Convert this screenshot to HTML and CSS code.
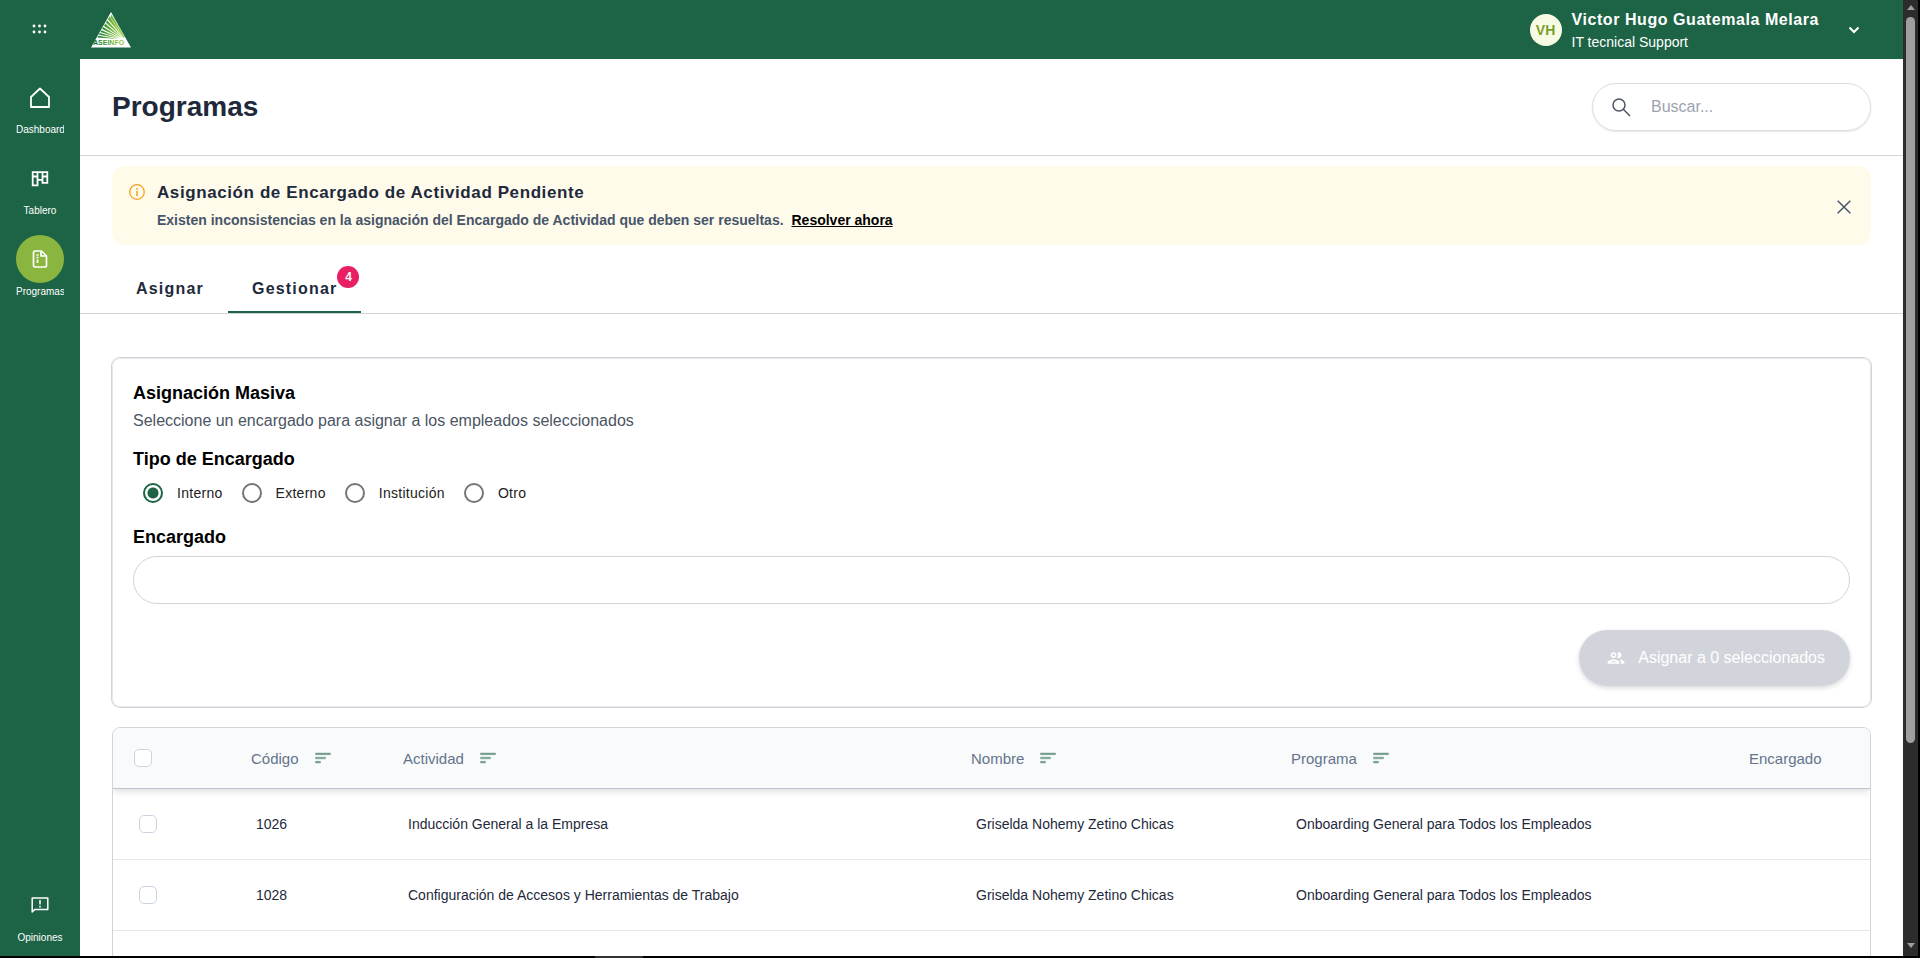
FILE: index.html
```
<!DOCTYPE html>
<html lang="es">

<head>
    <meta charset="UTF-8">
    <meta name="viewport" content="width=device-width, initial-scale=1">
    <title>Programas</title>
    <link rel="stylesheet" href="styles.css">
</head>

<body>
    <div class="app">
        <nav class="sidebar">
            <button class="sidebar__apps" aria-label="Aplicaciones">
                <svg width="16" height="12" viewBox="0 0 16 12" fill="#fff">
                    <circle cx="2" cy="3" r="1.4" /><circle cx="7.5" cy="3" r="1.4" /><circle cx="13" cy="3" r="1.4" />
                    <circle cx="2" cy="9" r="1.4" /><circle cx="7.5" cy="9" r="1.4" /><circle cx="13" cy="9" r="1.4" />
                </svg>
            </button>
            <a class="sidebar__item" href="#dashboard">
                <span class="sidebar__icon">
                    <svg width="24" height="24" viewBox="0 0 24 24" fill="none" stroke="#fff" stroke-width="1.8" stroke-linejoin="round">
                        <path d="M3 22V12l9-8.500L21 12v10z" />
                    </svg>
                </span>
                <span class="sidebar__label">Dashboard</span>
            </a>
            <a class="sidebar__item" href="#tablero">
                <span class="sidebar__icon">
                    <svg width="18" height="18" viewBox="0 0 18 18" fill="none" stroke="#fff" stroke-width="1.8">
                        <path d="M1.700 3.200h14.600v10.600h-4.800v-3h-5v5.500H1.700zM6.500 3.200v8M11.500 3.200v8M1.700 7.500h4.800M11.500 7.500h4.800" />
                    </svg>
                </span>
                <span class="sidebar__label">Tablero</span>
            </a>
            <a class="sidebar__item sidebar__item--active" href="#programas">
                <span class="sidebar__icon">
                    <svg width="18" height="18" viewBox="0 0 18 18" fill="none" stroke="#fff" stroke-width="1.700" stroke-linejoin="round">
                        <path d="M4 1h6.500l5 5v9.500a1.500 1.500 0 0 1-1.500 1.500H4a1.500 1.500 0 0 1-1.500-1.500v-13A1.500 1.500 0 0 1 4 1z" />
                        <path d="M10 1.500v4.500h5M5.500 5h2M5.500 7.500h2M6.500 9.500v3.500" />
                    </svg>
                </span>
                <span class="sidebar__label">Programas</span>
            </a>
            <a class="sidebar__item sidebar__item--last" href="#opiniones">
                <span class="sidebar__icon">
                    <svg width="18" height="18" viewBox="0 0 18 18" fill="none" stroke="#fff" stroke-width="1.500">
                        <path d="M1.200 16V2h15.600v11.500H3.700z" stroke-linejoin="round" />
                        <path d="M9 4v4.500M9 9.800v1.600" />
                    </svg>
                </span>
                <span class="sidebar__label">Opiniones</span>
            </a>
        </nav>

        <div class="page">
            <header class="topbar">
                <svg class="topbar__logo" width="40" height="36" viewBox="0 0 40 36">
                    <defs>
                        <linearGradient id="rays" gradientUnits="userSpaceOnUse" x1="3" y1="0" x2="36" y2="0">
                            <stop offset="0.100" stop-color="#157a3a" />
                            <stop offset="0.700" stop-color="#8cc63f" />
                        </linearGradient>
                    </defs>
                    <path d="M20 0l20 35.500H0z" fill="#fff" />
                    <g fill="url(#rays)">
                        <path d="M20.300 2.500L33.500 26l-14-20.500z" />
                        <path d="M20.600 2.500l3.200 5L34 26l-2-1z" />
                        <path d="M18.400 4.500L33 26 17 7.200z" />
                        <path d="M16.200 8.200L32 26 14.900 10.500z" />
                        <path d="M14.200 11.600L31 26 13 13.900z" />
                        <path d="M12.300 15L30 26 11.100 17.100z" />
                        <path d="M10.500 18.200L29 26.300 9.400 20z" />
                        <path d="M8.900 21.100L28 26.500 8 22.800z" />
                        <path d="M7.300 23.800L27 26.900 6.500 25.500z" />
                    </g>
                    <text class="logo-text" x="2" y="32.500" fill="url(#rays)">ASEINFO</text>
                </svg>
                <div class="user">
                    <span class="user__avatar">VH</span>
                    <div>
                        <div class="user__name">Victor Hugo Guatemala Melara</div>
                        <div class="user__role">IT tecnical Support</div>
                    </div>
                    <button class="user__toggle" aria-label="Menú de usuario">
                        <svg width="12" height="12" viewBox="0 0 12 12" fill="none" stroke="#fff" stroke-width="2">
                            <path d="M1.500 3.500L6 8l4.500-4.500" />
                        </svg>
                    </button>
                </div>
            </header>

            <div class="heading">
                <h1 class="heading__title">Programas</h1>
                <label class="search">
                    <svg width="20" height="20" viewBox="0 0 20 20" fill="none" stroke="#4b5563" stroke-width="1.500">
                        <circle cx="8" cy="8" r="6" />
                        <path d="M12.300 12.300L19 19" />
                    </svg>
                    <input class="search__input" type="search" placeholder="Buscar..." aria-label="Buscar">
                </label>
            </div>

            <section class="alert">
                <svg class="alert__icon" width="16" height="16" viewBox="0 0 16 16" fill="none" stroke="#f59e1b">
                    <circle cx="8" cy="8" r="7.300" stroke-width="1.300" />
                    <path d="M8 4v1.700M8 7v5" stroke-width="1.500" />
                </svg>
                <div class="alert__body">
                    <h2 class="alert__title">Asignación de Encargado de Actividad Pendiente</h2>
                    <p class="alert__text">Existen inconsistencias en la asignación del Encargado de Actividad que deben ser resueltas. <a class="alert__link" href="#resolver">Resolver ahora</a></p>
                </div>
                <button class="alert__close" aria-label="Cerrar">
                    <svg width="14" height="14" viewBox="0 0 14 14" stroke="#475569" stroke-width="1.500">
                        <path d="M.7.700l12.600 12.600M13.300.700L.7 13.300" />
                    </svg>
                </button>
            </section>

            <div class="tabs" role="tablist">
                <button class="tab" role="tab">Asignar</button>
                <button class="tab tab--active" role="tab" aria-selected="true">Gestionar<span class="tab__badge">4</span></button>
            </div>

            <main class="content">
                <form class="card">
                    <h3 class="card__title">Asignación Masiva</h3>
                    <p class="card__text">Seleccione un encargado para asignar a los empleados seleccionados</p>
                    <h3 class="card__title card__title--spaced">Tipo de Encargado</h3>
                    <div class="radios">
                        <label class="radio"><input type="radio" name="tipo" checked>Interno</label>
                        <label class="radio"><input type="radio" name="tipo">Externo</label>
                        <label class="radio"><input type="radio" name="tipo">Institución</label>
                        <label class="radio"><input type="radio" name="tipo">Otro</label>
                    </div>
                    <label class="card__title" for="encargado">Encargado</label>
                    <input class="card__input" id="encargado" type="text">
                    <button class="assign" type="button" disabled>
                        <svg width="20" height="20" viewBox="0 0 24 24" fill="#fff">
                            <path d="M9 13.750c-2.340 0-7 1.170-7 3.500V19h14v-1.750c0-2.330-4.660-3.500-7-3.500zM4.340 17c.84-.58 2.870-1.250 4.660-1.250s3.820.67 4.660 1.250H4.340zM9 12c1.930 0 3.500-1.570 3.500-3.500S10.930 5 9 5 5.500 6.570 5.500 8.500 7.070 12 9 12zm0-5c.83 0 1.500.67 1.500 1.500S9.830 10 9 10s-1.500-.67-1.500-1.500S8.170 7 9 7zm7.040 6.810c1.160.84 1.960 1.960 1.960 3.440V19h4v-1.750c0-2.020-3.500-3.170-5.960-3.440zM15 12c1.930 0 3.500-1.570 3.500-3.500S16.930 5 15 5c-.54 0-1.040.13-1.500.35.63.89 1 1.980 1 3.150s-.37 2.260-1 3.150c.46.22.96.35 1.500.35z" />
                        </svg>
                        Asignar a 0 seleccionados
                    </button>
                </form>

                <div class="table-wrap">
                    <table class="table">
                        <colgroup>
                            <col class="col-check">
                            <col class="col-code">
                            <col>
                            <col class="col-name">
                            <col class="col-program">
                            <col class="col-manager">
                        </colgroup>
                        <thead>
                            <tr>
                                <th><input class="check" type="checkbox" aria-label="Seleccionar todos"></th>
                                <th><button class="sort">Código <svg width="20" height="20" viewBox="0 0 24 24"><path d="M3 18h6v-2H3v2zM3 6v2h18V6H3zm0 7h12v-2H3v2z" /></svg></button></th>
                                <th><button class="sort">Actividad <svg width="20" height="20" viewBox="0 0 24 24"><path d="M3 18h6v-2H3v2zM3 6v2h18V6H3zm0 7h12v-2H3v2z" /></svg></button></th>
                                <th><button class="sort">Nombre <svg width="20" height="20" viewBox="0 0 24 24"><path d="M3 18h6v-2H3v2zM3 6v2h18V6H3zm0 7h12v-2H3v2z" /></svg></button></th>
                                <th><button class="sort">Programa <svg width="20" height="20" viewBox="0 0 24 24"><path d="M3 18h6v-2H3v2zM3 6v2h18V6H3zm0 7h12v-2H3v2z" /></svg></button></th>
                                <th>Encargado</th>
                            </tr>
                        </thead>
                        <tbody>
                            <tr>
                                <td><input class="check" type="checkbox" aria-label="Seleccionar 1026"></td>
                                <td>1026</td>
                                <td>Inducción General a la Empresa</td>
                                <td>Griselda Nohemy Zetino Chicas</td>
                                <td>Onboarding General para Todos los Empleados</td>
                                <td></td>
                            </tr>
                            <tr>
                                <td><input class="check" type="checkbox" aria-label="Seleccionar 1028"></td>
                                <td>1028</td>
                                <td>Configuración de Accesos y Herramientas de Trabajo</td>
                                <td>Griselda Nohemy Zetino Chicas</td>
                                <td>Onboarding General para Todos los Empleados</td>
                                <td></td>
                            </tr>
                            <tr>
                                <td></td>
                                <td></td>
                                <td></td>
                                <td></td>
                                <td></td>
                                <td></td>
                            </tr>
                        </tbody>
                    </table>
                </div>
            </main>
        </div>

        <div class="scrollbar">
            <span class="scrollbar__up"></span>
            <span class="scrollbar__thumb"></span>
            <span class="scrollbar__down"></span>
        </div>
    </div>
    <div class="edge"><span class="edge__mark"></span></div>
</body>

</html>
```
FILE: styles.css
```
*,
*:before,
*:after {
    box-sizing: border-box;
}

body {
    margin: 0;
    height: 100vh;
    display: flex;
    flex-direction: column;
    overflow: hidden;
    background: #fff;
    color: #1e293b;
    font-family: Arial, "Liberation Sans", sans-serif;
    font-size: 14px;
}

h1,
h2,
h3,
p {
    margin: 0;
}

button {
    background: none;
    border: 0;
    padding: 0;
    font: inherit;
    color: inherit;
    cursor: pointer;
}

svg {
    display: block;
    flex: none;
}

.app {
    flex: 1;
    min-height: 0;
    display: flex;
    border-right: 2px solid #000;
}

/* Sidebar */

.sidebar {
    width: 80px;
    flex: none;
    display: flex;
    flex-direction: column;
    align-items: center;
    gap: 15px;
    padding-bottom: 9px;
    background: #1d6446;
    color: #fff;
}

.sidebar__apps {
    height: 58px;
}

.sidebar__item {
    width: 48px;
    color: #fff;
    text-decoration: none;
}

.sidebar__item--last {
    margin-top: auto;
}

.sidebar__icon {
    display: flex;
    align-items: center;
    justify-content: center;
    height: 48px;
    border-radius: 50%;
}

.sidebar__item--active .sidebar__icon {
    background: #8ab640;
}

.sidebar__label {
    display: block;
    overflow: hidden;
    font-size: 10px;
    line-height: 18px;
    text-align: center;
}

/* Top bar */

.page {
    flex: 1;
    min-width: 0;
    overflow: hidden;
}

.topbar {
    display: flex;
    align-items: center;
    justify-content: space-between;
    height: 59px;
    padding: 0 43px 0 11px;
    background: #1d6446;
    color: #fff;
}

.logo-text {
    font-size: 7px;
    font-weight: bold;
}

.user {
    display: flex;
    align-items: center;
    gap: 10px;
}

.user__avatar {
    width: 32px;
    height: 32px;
    border-radius: 50%;
    background: #f7fbe4;
    color: #7a9e2e;
    font-weight: bold;
    line-height: 32px;
    text-align: center;
}

.user__name {
    font-size: 16px;
    font-weight: bold;
    line-height: 24px;
    letter-spacing: 0.035em;
}

.user__role {
    line-height: 20px;
}

.user__toggle {
    margin-left: 19px;
}

/* Page heading */

.heading {
    display: flex;
    align-items: center;
    justify-content: space-between;
    height: 97px;
    padding: 0 32px;
    border-bottom: 1px solid #d1d5db;
}

.heading__title {
    font-size: 28px;
    line-height: 36px;
}

.search {
    display: flex;
    align-items: center;
    gap: 18px;
    width: 279px;
    height: 48px;
    padding: 0 18px;
    border: 1px solid #dcdde0;
    border-radius: 24px;
    box-shadow: 0 1px 2px rgba(0, 0, 0, 0.1);
}

.search__input {
    flex: 1;
    min-width: 0;
    border: 0;
    outline: 0;
    font: inherit;
    font-size: 16px;
}

.search__input::placeholder {
    color: #9ca3af;
}

/* Alert */

.alert {
    display: flex;
    align-items: flex-start;
    gap: 12px;
    margin: 10px 32px 20px;
    padding: 16px 20px 13px 17px;
    border-radius: 12px;
    background: #fffbeb;
}

.alert__icon {
    margin-top: 2px;
}

.alert__body {
    flex: 1;
}

.alert__title {
    margin-bottom: 4px;
    font-size: 17px;
    font-weight: 800;
    line-height: 22px;
    letter-spacing: 0.035em;
}

.alert__text {
    color: #475569;
    font-weight: bold;
    line-height: 24px;
}

.alert__link {
    margin-left: 4px;
    color: #000;
}

.alert__close {
    align-self: center;
}

/* Tabs */

.tabs {
    display: flex;
    padding: 0 32px;
    border-bottom: 1px solid #d1d5db;
}

.tab {
    position: relative;
    height: 48px;
    padding: 2px 24px 0;
    border-bottom: 2px solid transparent;
    font-size: 16px;
    font-weight: bold;
    letter-spacing: 0.075em;
}

.tab--active {
    border-bottom-color: #1d6446;
}

.tab__badge {
    position: absolute;
    top: 1px;
    right: 2px;
    width: 22px;
    height: 22px;
    border-radius: 50%;
    background: #e91e63;
    color: #fff;
    font-size: 12px;
    line-height: 22px;
    letter-spacing: 0;
}

/* Assignment card */

.content {
    padding: 44px 32px 0;
}

.card {
    display: flex;
    flex-direction: column;
    margin-bottom: 20px;
    padding: 20px;
    border: 1px solid #e5e7eb;
    border-radius: 8px;
    box-shadow: 0 0 0 1px #d1d5db;
}

.card__title {
    color: #000;
    font-size: 18px;
    font-weight: bold;
    line-height: 28px;
}

.card__title--spaced {
    margin-top: 10px;
}

.card__text {
    color: #4b5563;
    font-size: 16px;
    line-height: 28px;
}

.radios {
    display: flex;
    gap: 9px;
    margin-bottom: 10px;
}

.radio {
    display: flex;
    align-items: center;
    gap: 14px;
    height: 40px;
    padding-left: 10px;
    color: #212121;
    letter-spacing: 0.02em;
}

.radio input {
    appearance: none;
    width: 20px;
    height: 20px;
    margin: 0;
    border: 2px solid #757575;
    border-radius: 50%;
}

.radio input:checked {
    border-color: #1d6446;
    background: radial-gradient(circle, #1d6446 5px, transparent 6px);
}

.card__input {
    height: 48px;
    margin: 5px 0 26px;
    padding: 0 20px;
    border: 1px solid #d1d5db;
    border-radius: 24px;
    font: inherit;
}

.assign {
    display: flex;
    align-items: center;
    align-self: flex-end;
    gap: 12px;
    height: 56px;
    padding: 0 25px 0 27px;
    border-radius: 28px;
    background: #d1d5db;
    box-shadow: 0 2px 5px rgba(0, 0, 0, 0.15);
    color: #fff;
    font-size: 16px;
}

/* Table */

.table-wrap {
    overflow: hidden;
    border: 1px solid #d1d5db;
    border-radius: 8px 8px 0 0;
}

.table {
    width: 100%;
    table-layout: fixed;
    border-spacing: 0;
}

.col-check {
    width: 116px;
}

.col-code {
    width: 152px;
}

.col-name {
    width: 320px;
}

.col-program {
    width: 458px;
}

.col-manager {
    width: 143px;
}

.table thead {
    box-shadow: 0 2px 8px rgba(0, 0, 0, 0.15);
}

.table th {
    height: 61px;
    padding: 0 0 0 22px;
    border-bottom: 1px solid #c0c4cf;
    background: #f8fafc;
    color: #64748b;
    font-size: 15px;
    font-weight: normal;
    text-align: left;
}

.table td {
    height: 71px;
    padding: 0 0 0 27px;
    border-bottom: 1px solid #e5e7eb;
}

.table th:first-child {
    padding-left: 21px;
}

.table td:first-child {
    padding-left: 26px;
}

.sort {
    display: flex;
    align-items: center;
    gap: 14px;
}

.sort svg {
    fill: #6f9a89;
    stroke: #6f9a89;
    stroke-width: 0.5;
}

.check {
    appearance: none;
    display: block;
    width: 18px;
    height: 18px;
    margin: 0;
    border: 1px solid #cbd5e1;
    border-radius: 5px;
    background: #fff;
}

/* Scrollbar */

.scrollbar {
    display: flex;
    flex-direction: column;
    align-items: center;
    width: 15px;
    flex: none;
    padding: 5px 0 8px;
    background: #2c2c2c;
}

.scrollbar__up,
.scrollbar__down {
    border: 4px solid transparent;
}

.scrollbar__up {
    border-top: 0;
    border-bottom: 5px solid #9f9f9f;
}

.scrollbar__down {
    margin-top: auto;
    border-top: 5px solid #9f9f9f;
    border-bottom: 0;
}

.scrollbar__thumb {
    width: 9px;
    height: 77%;
    margin-top: 7px;
    border-radius: 5px;
    background: #9f9f9f;
}

.edge {
    display: flex;
    height: 2px;
    padding-left: 31%;
    background: #000;
}

.edge__mark {
    width: 48px;
    background: #333;
}
```
